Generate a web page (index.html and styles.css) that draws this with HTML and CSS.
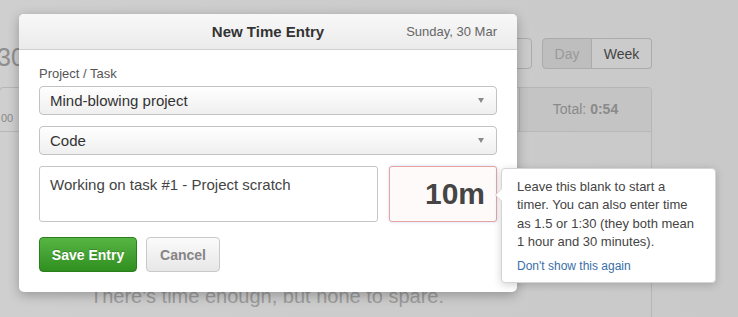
FILE: index.html
```html
<!DOCTYPE html>
<html lang="en">
<head>
    <meta charset="UTF-8">
    <meta name="viewport" content="width=device-width, initial-scale=1.0">
    <title>New Time Entry</title>
    <link rel="stylesheet" href="styles.css">
</head>
<body>
    <div class="app">
        <div class="toolbar">
            <div class="day-title">30 Mar</div>
            <div class="toolbar-right">
                <button class="tb-btn nav-btn">&rsaquo;</button>
                <div class="segmented">
                    <button class="tb-btn seg-btn pressed">Day</button>
                    <button class="tb-btn seg-btn strong">Week</button>
                </div>
            </div>
        </div>

        <div class="panel">
            <div class="panel-head">
                <div class="head-days">00</div>
                <div class="head-total">Total: <b>0:54</b></div>
            </div>
            <div class="panel-body">
                <p class="empty-msg">There's time enough, but none to spare.</p>
            </div>
        </div>
    </div>

    <div class="modal">
        <div class="modal-head">
            <h2 class="modal-title">New Time Entry</h2>
            <span class="modal-date">Sunday, 30 Mar</span>
        </div>
        <div class="modal-body">
            <label class="field-label">Project / Task</label>
            <div class="select">Mind-blowing project<span class="caret"></span></div>
            <div class="select">Code<span class="caret"></span></div>
            <div class="entry-row">
                <div class="notes">Working on task #1 - Project scratch</div>
                <div class="hours">10m</div>
            </div>
            <div class="actions">
                <button class="btn btn-save">Save Entry</button>
                <button class="btn btn-cancel">Cancel</button>
            </div>
        </div>
    </div>

    <div class="tip">
        <p class="tip-text">Leave this blank to start a timer. You can also enter time as 1.5 or 1:30 (they both mean 1 hour and 30 minutes).</p>
        <a class="tip-link" href="#">Don't show this again</a>
    </div>
</body>
</html>
```

FILE: styles.css
```css
body {
    margin: 0;
    height: 317px;
    overflow: hidden;
    font-family: 'Liberation Sans', Arial, sans-serif;
    background: linear-gradient(to right, #cfcfcf, #c9c9c9);
    color: #333;
}

/* dimmed page behind the dialog */
.app {
    padding-top: 38px;
    width: 652px;
}

.toolbar {
    display: flex;
    justify-content: space-between;
    height: 31px;
}

.day-title {
    margin-left: -3px;
    padding-top: 6px;
    font-size: 25px;
    line-height: 26px;
    color: #8e8e8e;
}

.toolbar-right {
    display: flex;
    gap: 10px;
}

.tb-btn {
    font-family: inherit;
    font-size: 14px;
    color: #999;
    background: #cbcbcb;
    border: 1px solid #ababab;
    border-radius: 4px;
    padding: 0;
    height: 31px;
}

.nav-btn {
    width: 60px;
    font-size: 18px;
}

.segmented {
    display: flex;
}

.seg-btn {
    width: 50px;
}

.seg-btn.pressed {
    background: #bebebe;
    border-radius: 4px 0 0 4px;
}

.seg-btn.strong {
    width: 60px;
    border-left: none;
    border-radius: 0 4px 4px 0;
    color: #444;
}

.panel {
    margin-top: 18px;
    margin-left: -1px;
    width: 653px;
    height: 240px;
    box-sizing: border-box;
    border: 1px solid #b6b6b6;
    border-radius: 4px;
}

.panel-head {
    display: flex;
    height: 43px;
    border-bottom: 1px solid #b8b8b8;
}

.head-days {
    flex: 1;
    padding: 24px 0 0 1px;
    font-size: 11px;
    color: #888;
}

.head-total {
    width: 131px;
    background: #c4c4c4;
    border-left: 1px solid #b3b3b3;
    border-radius: 0 4px 0 0;
    text-align: center;
    line-height: 43px;
    font-size: 14px;
    color: #8a8a8a;
}

.panel-body {
    padding-right: 117px;
}

.empty-msg {
    margin: 151px 0 0;
    text-align: center;
    font-size: 20px;
    line-height: 26px;
    color: #9c9c9c;
}

/* dialog */
.modal {
    position: absolute;
    left: 19px;
    top: 14px;
    width: 498px;
    height: 278px;
    background: #fff;
    border-radius: 5px;
    box-shadow: 0 3px 12px rgba(0, 0, 0, 0.28);
}

.modal-head {
    position: relative;
    height: 35px;
    border-bottom: 1px solid #cfcfcf;
    border-radius: 5px 5px 0 0;
    background: linear-gradient(#f8f8f8, #ebebeb);
}

.modal-title {
    margin: 0;
    text-align: center;
    font-size: 15px;
    line-height: 35px;
    color: #333;
}

.modal-date {
    position: absolute;
    right: 20px;
    top: 0;
    font-size: 13px;
    line-height: 35px;
    color: #666;
}

.modal-body {
    display: flex;
    flex-direction: column;
    padding: 16px 20px 0;
}

.field-label {
    font-size: 13px;
    line-height: 16px;
    color: #555;
    margin-bottom: 4px;
}

.select {
    display: flex;
    justify-content: space-between;
    align-items: center;
    height: 29px;
    box-sizing: border-box;
    padding: 0 12px 0 10px;
    margin-bottom: 11px;
    border: 1px solid #c2c2c2;
    border-radius: 4px;
    background: linear-gradient(#ffffff, #efefef);
    font-size: 15px;
    color: #333;
}

.caret {
    width: 0;
    height: 0;
    border-left: 3px solid transparent;
    border-right: 3px solid transparent;
    border-top: 5px solid #8a8a8a;
}

.entry-row {
    display: flex;
    gap: 11px;
}

.notes {
    flex: 1;
    height: 56px;
    box-sizing: border-box;
    padding: 9px 10px;
    border: 1px solid #c6c6c6;
    border-radius: 3px;
    font-size: 15px;
    line-height: 18px;
    color: #444;
}

.hours {
    width: 108px;
    height: 56px;
    box-sizing: border-box;
    padding-right: 11px;
    border: 1px solid #e8a2a2;
    border-radius: 3px;
    background: #fffafa;
    box-shadow: 0 0 3px rgba(130, 165, 220, 0.45);
    text-align: right;
    font-size: 30px;
    font-weight: bold;
    line-height: 54px;
    color: #454545;
}

.actions {
    display: flex;
    gap: 9px;
    margin-top: 15px;
}

.btn {
    height: 35px;
    font-family: inherit;
    font-size: 14px;
    font-weight: bold;
    border-radius: 4px;
    cursor: pointer;
}

.btn-save {
    width: 98px;
    color: #fff;
    background: linear-gradient(#57b544, #2f8f1f);
    border: 1px solid #2b7d1d;
    text-shadow: 0 -1px 0 rgba(0, 0, 0, 0.2);
}

.btn-cancel {
    width: 74px;
    color: #858585;
    background: linear-gradient(#fbfbfb, #e7e7e7);
    border: 1px solid #c9c9c9;
}

/* hint bubble */
.tip {
    position: absolute;
    left: 501px;
    top: 168px;
    width: 215px;
    height: 115px;
    box-sizing: border-box;
    padding: 9px 12px 0 15px;
    background: #fff;
    border: 1px solid #d4d4d4;
    border-radius: 4px;
    box-shadow: 0 2px 8px rgba(0, 0, 0, 0.18);
}

.tip::before {
    content: '';
    position: absolute;
    left: -7px;
    top: 19px;
    width: 0;
    height: 0;
    border-top: 7px solid transparent;
    border-bottom: 7px solid transparent;
    border-right: 7px solid #d4d4d4;
}

.tip::after {
    content: '';
    position: absolute;
    left: -6px;
    top: 20px;
    width: 0;
    height: 0;
    border-top: 6px solid transparent;
    border-bottom: 6px solid transparent;
    border-right: 6px solid #fff;
}

.tip-text {
    width: 181px;
    margin: 0 0 5px;
    font-size: 13px;
    line-height: 18.3px;
    color: #444;
}

.tip-link {
    font-size: 12px;
    line-height: 16px;
    color: #3a6ea8;
    text-decoration: none;
}
```
